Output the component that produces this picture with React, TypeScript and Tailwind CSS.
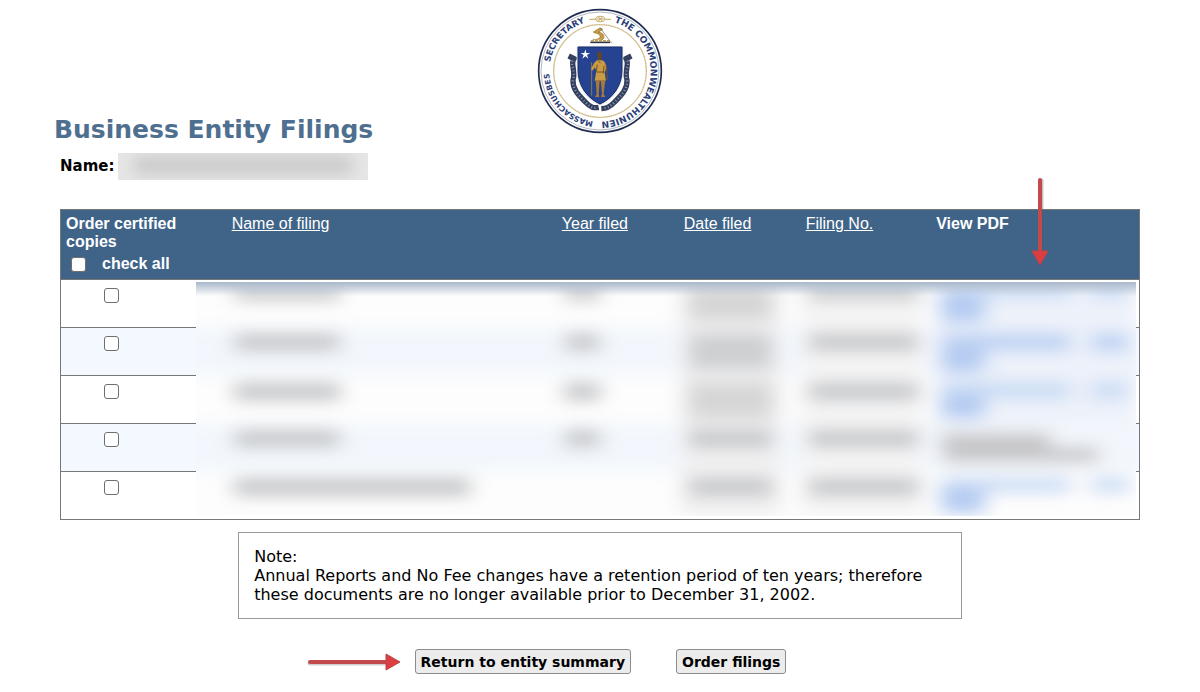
import { useState } from 'react';

const columns = ['Name of filing', 'Year filed', 'Date filed', 'Filing No.'];

const rows = [1, 2, 3, 4, 5];

const GRAY = '#c6c7c9';
const BLUE = '#b4cbf1';

// x, y, width, height, fill
const smudges: [number, number, number, number, string][] = [
  [38, 4, 106, 14, GRAY],
  [38, 51, 106, 18, GRAY],
  [38, 100, 106, 18, GRAY],
  [38, 147, 106, 18, GRAY],
  [38, 195, 236, 18, GRAY],
  [368, 4, 36, 14, GRAY],
  [368, 51, 36, 18, GRAY],
  [368, 100, 36, 18, GRAY],
  [368, 147, 36, 18, GRAY],
  [492, 4, 84, 34, '#d6d6d6'],
  [492, 51, 84, 36, '#cecfd1'],
  [492, 100, 84, 36, '#d6d6d6'],
  [492, 147, 84, 18, GRAY],
  [492, 195, 84, 18, GRAY],
  [612, 4, 110, 14, GRAY],
  [612, 51, 110, 18, GRAY],
  [612, 100, 110, 18, GRAY],
  [612, 147, 110, 18, GRAY],
  [612, 195, 110, 18, GRAY],
  [744, 2, 130, 14, '#c8daf4'],
  [894, 2, 38, 14, '#c8daf4'],
  [744, 12, 44, 28, BLUE],
  [744, 51, 130, 18, '#bdd2f3'],
  [894, 51, 38, 18, '#bdd2f3'],
  [744, 64, 44, 26, BLUE],
  [744, 100, 130, 16, '#c8daf4'],
  [894, 100, 38, 16, '#c8daf4'],
  [744, 112, 44, 24, BLUE],
  [744, 150, 110, 18, '#c6c6c8'],
  [746, 164, 156, 16, '#c8c8ca'],
  [744, 195, 130, 14, '#c8daf4'],
  [894, 195, 38, 14, '#c8daf4'],
  [744, 206, 44, 24, BLUE],
];

function Seal() {
  return (
    <svg className="h-[126px] w-[126px]" viewBox="21 24 378 378" role="img" aria-label="State seal">
      <defs>
        <path id="ring" d="M58 213 A152 152 0 1 1 58 213.1" />
        <path id="ring-lower" d="M210 365 A152 152 0 1 1 210.1 365" />
      </defs>
      <circle cx="210" cy="213" r="184" fill="#fff" stroke="#1f2b50" strokeWidth="5" />
      <circle cx="210" cy="213" r="177" fill="none" stroke="#8d93a5" strokeWidth="2" />
      <circle cx="210" cy="213" r="139" fill="none" stroke="#e0cfa8" strokeWidth="4" />
      <circle cx="210" cy="213" r="139" fill="none" stroke="#c4a970" strokeWidth="3" strokeDasharray="3 4" />
      <g fill="#2c4078" fontSize="27" fontWeight="700" fontFamily="'DejaVu Sans', sans-serif">
        <text fontSize="26"><textPath href="#ring" startOffset="26">SECRETARY</textPath></text>
        <text><textPath href="#ring" startOffset="282">THE COMMONWEALTHUNIEN</textPath></text>
        <text fontSize="23"><textPath href="#ring-lower" startOffset="20">MASSACHUSBES</textPath></text>
      </g>

      {/* ornament between the words */}
      <g fill="none" stroke="#c3a763" strokeWidth="3">
        <path d="M178 58 H196 M226 58 H243" />
        <ellipse cx="211" cy="57" rx="14" ry="8" />
        <path d="M199 57 H223 M205 51 L217 63 M217 51 L205 63" />
      </g>

      {/* crest */}
      <path d="M181 127 H240" stroke="#303548" strokeWidth="5" />
      <path d="M183 122 H238" stroke="#c49b49" strokeWidth="4" strokeDasharray="9 3" />
      <path d="M188 118 C204 120 215 113 209 105 C201 97 192 101 190 96 L210 84 L218 88 L205 97 C222 98 227 112 216 120" fill="#c99a3f" stroke="#8a692e" strokeWidth="2" />
      <path d="M210 83 L245 130" stroke="#725e3b" strokeWidth="2" />

      {/* ribbon */}
      <g fill="none">
        <path d="M116 168 L132 176 C120 190 138 214 129 240 C127 268 147 287 166 306 C182 323 192 325 206 322" stroke="#34405f" strokeWidth="16" />
        <path d="M304 168 L288 176 C300 190 282 214 291 240 C293 268 273 287 254 306 C238 323 228 325 214 326" stroke="#34405f" strokeWidth="16" />
        <path d="M128 182 C120 195 138 214 129 240 C127 268 147 287 166 306 C182 323 192 325 196 323" stroke="#8f98ad" strokeWidth="7" strokeDasharray="3 7" />
        <path d="M292 182 C300 195 282 214 291 240 C293 268 273 287 254 306 C238 323 228 325 218 326" stroke="#8f98ad" strokeWidth="7" strokeDasharray="3 7" />
      </g>

      {/* shield */}
      <path d="M142 139 H278 V211 C278 257 252 296 210 315 C168 296 142 257 142 211 Z" fill="#264391" stroke="#e5e8ef" strokeWidth="4" />
      <path d="M144 141 H276 V211 C276 256 250 293 210 312 C170 293 144 256 144 211 Z" fill="none" stroke="#1d3068" strokeWidth="3" />
      <path d="M166 148 L169 159 L180 159 L171 165 L175 176 L166 169 L157 176 L161 165 L152 159 L163 159 Z" fill="#fff" />
      <path d="M185 187 V287" stroke="#8e7a4a" strokeWidth="3" />
      <path d="M203 171 C200 159 205 150 210 157 C216 160 217 167 214 174 L214 182 H204 Z" fill="#654622" />
      <path d="M201 181 H216 C226 185 228 193 228 205 L224 219 L228 242 H194 L199 214 L195 202 L187 212 L183 207 L193 188 Z" fill="#c99b43" />
      <path d="M205 183 L212 190 M200 216 H224 M202 194 L199 214 M222 197 L220 220" fill="none" stroke="#725325" strokeWidth="3" />
      <path d="M197 240 H209 L206 282 L208 291 H195 L200 282 Z M212 240 H226 L221 282 L226 291 H213 L216 282 Z" fill="#a87937" />
      <path d="M229 196 L232 239" stroke="#765429" strokeWidth="3" />
    </svg>
  );
}

function Redaction() {
  return (
    <svg className="h-full w-full" viewBox="0 0 939 233" preserveAspectRatio="none" aria-hidden="true">
      <defs>
        <filter id="soft" x="0" y="0" width="939" height="233" filterUnits="userSpaceOnUse">
          <feGaussianBlur stdDeviation="10 8" />
        </filter>
        <linearGradient id="fade" x1="0" y1="0" x2="0" y2="1">
          <stop offset="0" stopColor="#a9b8cb" />
          <stop offset="1" stopColor="#a9b8cb" stopOpacity="0" />
        </linearGradient>
      </defs>
      <rect width="939" height="233" fill="#fdfdfd" />
      <g filter="url(#soft)">
        <rect x="-30" y="45" width="1000" height="48" fill="#f3f7fd" />
        <rect x="-30" y="141" width="1000" height="48" fill="#f3f7fd" />
        <rect x="484" y="0" width="100" height="233" fill="#f0f0f1" />
        <rect x="604" y="0" width="122" height="233" fill="#f4f4f5" />
        <rect x="740" y="0" width="199" height="140" fill="#edf2fa" />
        {smudges.map(([x, y, w, h, fill], i) => (
          <rect key={i} x={x} y={y} width={w} height={h} fill={fill} />
        ))}
      </g>
      <rect width="939" height="14" fill="url(#fade)" />
    </svg>
  );
}

function ArrowRight({ className }: { className: string }) {
  return (
    <svg className={className} viewBox="0 0 94 18" aria-hidden="true">
      <path d="M3 10 H80" stroke="#777" strokeOpacity="0.35" strokeWidth="5" strokeLinecap="round" />
      <path d="M3 9 H80" stroke="#c24a4d" strokeWidth="4" strokeLinecap="round" />
      <path d="M79 1 L93 9 L79 17 Z" fill="#dc3d41" stroke="#b84547" strokeWidth="1" />
    </svg>
  );
}

function ArrowDown({ className }: { className: string }) {
  return (
    <svg className={className} viewBox="0 0 18 88" aria-hidden="true">
      <path d="M10 3 V74" stroke="#555" strokeOpacity="0.35" strokeWidth="5" strokeLinecap="round" />
      <path d="M9 2 V74" stroke="#c24a4d" strokeWidth="4" strokeLinecap="round" />
      <path d="M1 73 L9 87 L17 73 Z" fill="#dc3d41" stroke="#b84547" strokeWidth="1" />
    </svg>
  );
}

export default function App() {
  const [checked, setChecked] = useState<number[]>([]);
  const all = checked.length === rows.length;

  const toggle = (id: number) =>
    setChecked(checked.includes(id) ? checked.filter((c) => c !== id) : [...checked, id]);

  const box = 'block h-[15px] w-[15px] appearance-none rounded-[3px] border border-[#6f6f6f] bg-white checked:bg-[#406488]';
  const button = 'h-[25px] rounded-[3px] border border-[#8c8c8c] bg-[#ececec] px-[5px] text-sm font-bold text-black';

  return (
    <div className="bg-white px-[54px] pt-2 pb-4 font-['DejaVu_Sans',sans-serif] text-black">
      <header className="flex h-[108px] justify-center">
        <Seal />
      </header>

      <h1 className="text-[25px] leading-7 font-bold text-[#4f6f90]">Business Entity Filings</h1>

      <div className="px-1.5">
        <div className="mt-2 flex h-7 items-center gap-1">
          <span className="text-[15px] font-bold">Name:</span>
          <div className="h-[27px] w-[250px] overflow-hidden bg-[#e6e6e6]">
            <div className="mx-4 mt-1 h-4 bg-[#c6c6c6] blur-[8px]" />
          </div>
        </div>

        <div className="relative mt-[29px]">
          <table className="w-full table-fixed border-collapse border border-[#777] font-['Liberation_Sans',sans-serif] text-base leading-[18px]">
            <thead>
              <tr className="h-[70px] bg-[#406488] text-left align-top text-white">
                <th className="w-[15.4%] px-[5px] pt-[5px]">
                  <div className="w-[120px]">Order certified copies</div>
                  <label className="mt-1 flex items-center gap-4 pl-[5px]">
                    <input
                      type="checkbox"
                      className={box}
                      checked={all}
                      onChange={() => setChecked(all ? [] : rows)}
                    />
                    check all
                  </label>
                </th>
                {columns.map((c, i) => (
                  <th
                    key={c}
                    className={
                      i === 0
                        ? 'w-[30.6%] px-[5px] pt-[5px] font-normal'
                        : i === 3
                          ? 'w-[12.1%] px-[5px] pt-[5px] font-normal'
                          : 'w-[11.3%] px-[5px] pt-[5px] font-normal'
                    }
                  >
                    <a href="#" className="underline">{c}</a>
                  </th>
                ))}
                <th className="px-[5px] pt-[5px]">View PDF</th>
              </tr>
            </thead>
            <tbody>
              {rows.map((id) => (
                <tr key={id} className="h-12 border-t border-[#777] align-top even:bg-[#f4f8ff]">
                  <td className="pt-2 pl-[43px]">
                    <input
                      type="checkbox"
                      className={box}
                      aria-label={`Filing ${id}`}
                      checked={checked.includes(id)}
                      onChange={() => toggle(id)}
                    />
                  </td>
                  <td colSpan={5} />
                </tr>
              ))}
            </tbody>
          </table>
          <div className="absolute top-[71px] right-1 bottom-1 left-[136px] border-t-2 border-white">
            <Redaction />
          </div>
          <ArrowDown className="absolute -top-[31px] right-[91px] h-[88px] w-[18px]" />
        </div>

        <div className="mx-auto mt-3 w-[67%] border border-[#999] px-[15px] pt-[14px] pb-[14px] text-base leading-[19px]">
          <p>Note:</p>
          <p>
            Annual Reports and No Fee changes have a retention period of ten years; therefore
            these documents are no longer available prior to December 31, 2002.
          </p>
        </div>

        <div className="mt-[30px] flex items-center justify-center">
          <ArrowRight className="mr-[14px] h-[18px] w-[94px]" />
          <button type="button" className={button}>Return to entity summary</button>
          <button type="button" className={`${button} mr-[107px] ml-[45px]`}>Order filings</button>
        </div>
      </div>
    </div>
  );
}
